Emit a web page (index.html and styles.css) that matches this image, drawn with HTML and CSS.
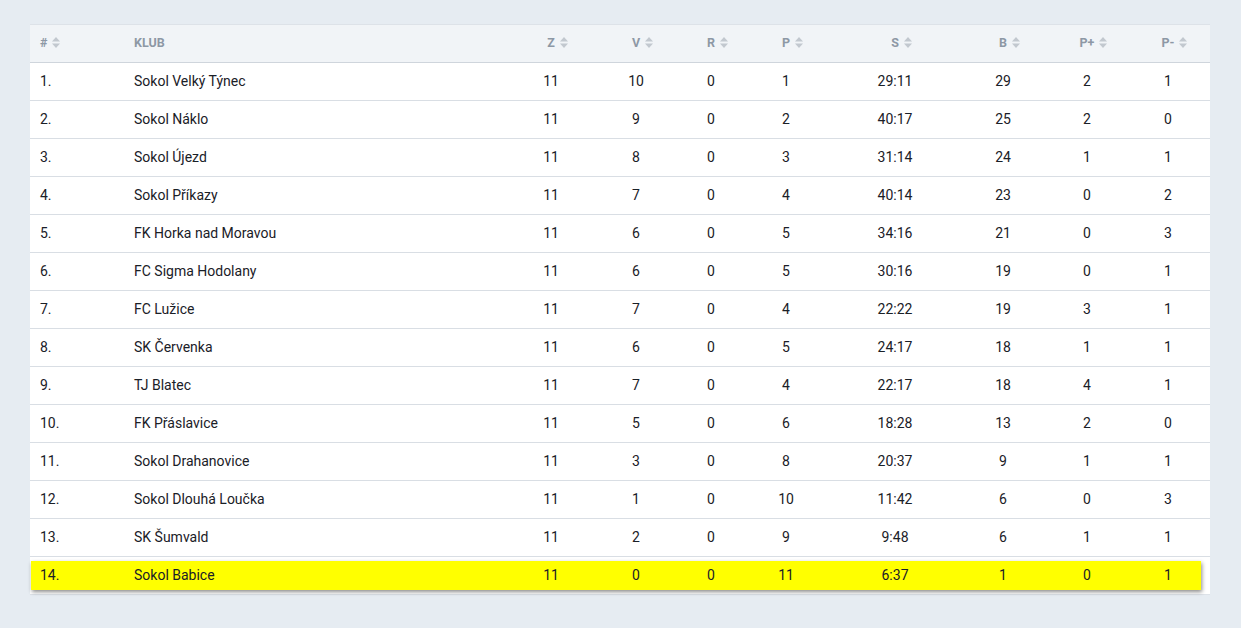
FILE: index.html
```html
<!DOCTYPE html>
<html lang="cs">
<head>
<meta charset="utf-8">
<link rel="stylesheet" href="styles.css">
<title>Tabulka</title>
</head>
<body>
<div class="page">
  <div class="table">
    <div class="row head">
      <div class="cell left"><span class="th">#<svg class="sort" viewBox="0 0 8 11"><path d="M0 4.6L4 0L8 4.6Z"/><path d="M0 6.4L4 11L8 6.4Z"/></svg></span></div>
      <div class="cell left"><span class="th">KLUB</span></div>
      <div class="cell"><span class="th">Z<svg class="sort" viewBox="0 0 8 11"><path d="M0 4.6L4 0L8 4.6Z"/><path d="M0 6.4L4 11L8 6.4Z"/></svg></span></div>
      <div class="cell"><span class="th">V<svg class="sort" viewBox="0 0 8 11"><path d="M0 4.6L4 0L8 4.6Z"/><path d="M0 6.4L4 11L8 6.4Z"/></svg></span></div>
      <div class="cell"><span class="th">R<svg class="sort" viewBox="0 0 8 11"><path d="M0 4.6L4 0L8 4.6Z"/><path d="M0 6.4L4 11L8 6.4Z"/></svg></span></div>
      <div class="cell"><span class="th">P<svg class="sort" viewBox="0 0 8 11"><path d="M0 4.6L4 0L8 4.6Z"/><path d="M0 6.4L4 11L8 6.4Z"/></svg></span></div>
      <div class="cell"><span class="th">S<svg class="sort" viewBox="0 0 8 11"><path d="M0 4.6L4 0L8 4.6Z"/><path d="M0 6.4L4 11L8 6.4Z"/></svg></span></div>
      <div class="cell"><span class="th">B<svg class="sort" viewBox="0 0 8 11"><path d="M0 4.6L4 0L8 4.6Z"/><path d="M0 6.4L4 11L8 6.4Z"/></svg></span></div>
      <div class="cell"><span class="th">P+<svg class="sort" viewBox="0 0 8 11"><path d="M0 4.6L4 0L8 4.6Z"/><path d="M0 6.4L4 11L8 6.4Z"/></svg></span></div>
      <div class="cell"><span class="th">P-<svg class="sort" viewBox="0 0 8 11"><path d="M0 4.6L4 0L8 4.6Z"/><path d="M0 6.4L4 11L8 6.4Z"/></svg></span></div>
    </div>
    <div class="row"><div class="cell left">1.</div><div class="cell left">Sokol Velký Týnec</div><div class="cell">11</div><div class="cell">10</div><div class="cell">0</div><div class="cell">1</div><div class="cell">29:11</div><div class="cell">29</div><div class="cell">2</div><div class="cell">1</div></div>
    <div class="row"><div class="cell left">2.</div><div class="cell left">Sokol Náklo</div><div class="cell">11</div><div class="cell">9</div><div class="cell">0</div><div class="cell">2</div><div class="cell">40:17</div><div class="cell">25</div><div class="cell">2</div><div class="cell">0</div></div>
    <div class="row"><div class="cell left">3.</div><div class="cell left">Sokol Újezd</div><div class="cell">11</div><div class="cell">8</div><div class="cell">0</div><div class="cell">3</div><div class="cell">31:14</div><div class="cell">24</div><div class="cell">1</div><div class="cell">1</div></div>
    <div class="row"><div class="cell left">4.</div><div class="cell left">Sokol Příkazy</div><div class="cell">11</div><div class="cell">7</div><div class="cell">0</div><div class="cell">4</div><div class="cell">40:14</div><div class="cell">23</div><div class="cell">0</div><div class="cell">2</div></div>
    <div class="row"><div class="cell left">5.</div><div class="cell left">FK Horka nad Moravou</div><div class="cell">11</div><div class="cell">6</div><div class="cell">0</div><div class="cell">5</div><div class="cell">34:16</div><div class="cell">21</div><div class="cell">0</div><div class="cell">3</div></div>
    <div class="row"><div class="cell left">6.</div><div class="cell left">FC Sigma Hodolany</div><div class="cell">11</div><div class="cell">6</div><div class="cell">0</div><div class="cell">5</div><div class="cell">30:16</div><div class="cell">19</div><div class="cell">0</div><div class="cell">1</div></div>
    <div class="row"><div class="cell left">7.</div><div class="cell left">FC Lužice</div><div class="cell">11</div><div class="cell">7</div><div class="cell">0</div><div class="cell">4</div><div class="cell">22:22</div><div class="cell">19</div><div class="cell">3</div><div class="cell">1</div></div>
    <div class="row"><div class="cell left">8.</div><div class="cell left">SK Červenka</div><div class="cell">11</div><div class="cell">6</div><div class="cell">0</div><div class="cell">5</div><div class="cell">24:17</div><div class="cell">18</div><div class="cell">1</div><div class="cell">1</div></div>
    <div class="row"><div class="cell left">9.</div><div class="cell left">TJ Blatec</div><div class="cell">11</div><div class="cell">7</div><div class="cell">0</div><div class="cell">4</div><div class="cell">22:17</div><div class="cell">18</div><div class="cell">4</div><div class="cell">1</div></div>
    <div class="row"><div class="cell left">10.</div><div class="cell left">FK Přáslavice</div><div class="cell">11</div><div class="cell">5</div><div class="cell">0</div><div class="cell">6</div><div class="cell">18:28</div><div class="cell">13</div><div class="cell">2</div><div class="cell">0</div></div>
    <div class="row"><div class="cell left">11.</div><div class="cell left">Sokol Drahanovice</div><div class="cell">11</div><div class="cell">3</div><div class="cell">0</div><div class="cell">8</div><div class="cell">20:37</div><div class="cell">9</div><div class="cell">1</div><div class="cell">1</div></div>
    <div class="row"><div class="cell left">12.</div><div class="cell left">Sokol Dlouhá Loučka</div><div class="cell">11</div><div class="cell">1</div><div class="cell">0</div><div class="cell">10</div><div class="cell">11:42</div><div class="cell">6</div><div class="cell">0</div><div class="cell">3</div></div>
    <div class="row"><div class="cell left">13.</div><div class="cell left">SK Šumvald</div><div class="cell">11</div><div class="cell">2</div><div class="cell">0</div><div class="cell">9</div><div class="cell">9:48</div><div class="cell">6</div><div class="cell">1</div><div class="cell">1</div></div>
    <div class="row hl"><div class="cell left">14.</div><div class="cell left">Sokol Babice</div><div class="cell">11</div><div class="cell">0</div><div class="cell">0</div><div class="cell">11</div><div class="cell">6:37</div><div class="cell">1</div><div class="cell">0</div><div class="cell">1</div></div>
  </div>
</div>
</body>
</html>
```
FILE: styles.css
```css
html, body {
  margin: 0;
  padding: 0;
  background: #e6ecf2;
  font-family: Roboto, "Liberation Sans", sans-serif;
}
.page {
  padding: 24px 31px 34px 30px;
}
.table {
  background: #fff;
  border-top: 1px solid #dde2e8;
  border-bottom: 1px solid #dde2e8;
  width: 1180px;
}
.row {
  box-sizing: border-box;
  display: grid;
  grid-template-columns: 94px 388px 78px 92px 58px 92px 126px 90px 78px 84px;
  height: 38px;
  padding-bottom: 2px;
  border-bottom: 1px solid #d9dee4;
  align-items: center;
  font-size: 14px;
  color: #1a2027;
  position: relative;
}
.row.head {
  background: #f1f4f7;
  height: 38px;
  padding-bottom: 3px;
  border-bottom: 1px solid #cfd5dc;
}
.row:last-child {
  border-bottom: none;
  height: 37px;
}
.cell {
  text-align: center;
  white-space: nowrap;
  position: relative;
  z-index: 1;
}
.cell.left {
  text-align: left;
  padding-left: 10px;
}
.th {
  position: relative;
  font-size: 12.5px;
  font-weight: 700;
  color: #8d98a5;
  text-transform: uppercase;
}
.sort {
  position: absolute;
  left: calc(100% + 5px);
  top: 50%;
  margin-top: -6px;
  width: 8px;
  height: 11px;
  fill: #c2c8cf;
}
.row.hl::before {
  content: "";
  position: absolute;
  left: 1px;
  right: 9px;
  top: 4px;
  bottom: 4px;
  background: #ffff00;
  box-shadow: 1px 2px 4px rgba(0, 0, 0, 0.45);
  z-index: 0;
}
```
